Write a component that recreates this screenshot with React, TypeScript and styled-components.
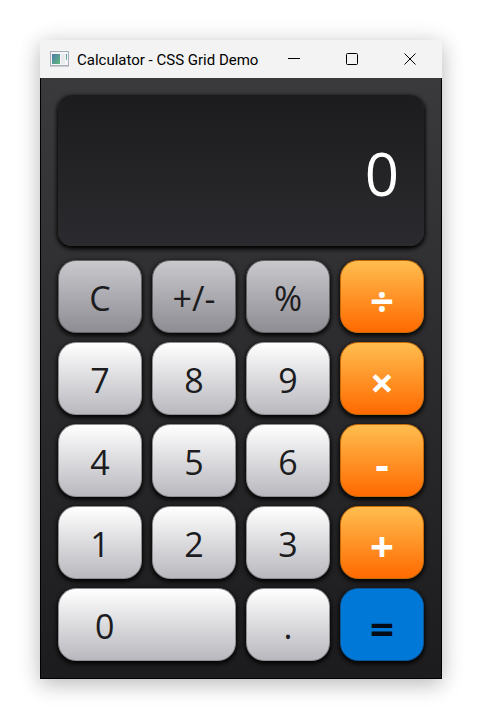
import React, { useState } from "react";
import styled, { createGlobalStyle, css } from "styled-components";

const GlobalStyle = createGlobalStyle`
  * { box-sizing: border-box; }
  body {
    margin: 0;
    background: #fff;
    font-family: "Open Sans", "Noto Sans", sans-serif;
  }
`;

const Desktop = styled.main`
  display: flex;
  min-height: 100vh;
  padding: 40px;
`;

const Window = styled.section`
  flex: 1;
  display: flex;
  flex-direction: column;
  box-shadow: 0 0 24px rgba(0, 0, 0, 0.08), 0 6px 20px rgba(0, 0, 0, 0.22);
`;

const TitleBar = styled.header`
  display: flex;
  align-items: center;
  height: 38px;
  padding: 0 3px 0 10px;
  background: #f3f3f3;
`;

const Title = styled.h1`
  flex: 1;
  min-width: 0;
  margin: 2px 0 0 8px;
  font-family: Roboto, "Open Sans", sans-serif;
  font-size: 15px;
  line-height: 20px;
  font-weight: 400;
  color: #000;
  white-space: nowrap;
`;

const WindowButton = styled.button`
  flex: none;
  display: flex;
  align-items: center;
  justify-content: center;
  width: 58px;
  height: 38px;
  padding: 0;
  border: 0;
  background: transparent;
`;

const Body = styled.div`
  flex: 1;
  display: flex;
  flex-direction: column;
  gap: 14px;
  padding: 17px;
  border: 1px solid #000;
  border-top: 0;
  background: linear-gradient(#3a3a3c, #1c1c1e);
`;

const Display = styled.output`
  display: flex;
  align-items: center;
  justify-content: flex-end;
  height: 151px;
  padding: 4px 24px 0;
  border: 1px solid transparent;
  border-radius: 14px;
  background: linear-gradient(#1c1c1e, #2b2b2f) border-box;
  box-shadow: 0 2px 4px 1px #000;
  color: #fff;
  font-size: 60px;
  line-height: 80px;
`;

const Keypad = styled.div`
  flex: 1;
  display: grid;
  grid-template-columns: repeat(4, 1fr);
  grid-auto-rows: 1fr;
  gap: 9px 10px;
`;

type Kind = "digit" | "function" | "operator" | "equals";

const operatorText = css`
  padding-top: 6px;
  font-size: 42px;
  font-weight: 700;
`;

const kinds = {
  digit: css`
    background: linear-gradient(#ffffff, #b8b8be);
    border-color: #8e8e93;
    color: #1c1c1e;
  `,
  function: css`
    background: linear-gradient(#c9c8cd, #8e8d93);
    border-color: #636366;
    color: #1c1c1e;
  `,
  operator: css`
    background: linear-gradient(#ffbd4f, #ff6a00);
    border-color: #c76a08;
    color: #fff;
    ${operatorText}
  `,
  equals: css`
    background: #0078d7;
    border-color: #0a5596;
    color: #050a14;
    ${operatorText}
  `,
};

const Key = styled.button<{ $kind: Kind; $wide?: boolean }>`
  min-width: 0;
  padding: 2px 0 0;
  border: 1px solid;
  border-radius: 18px;
  background-origin: border-box;
  box-shadow: 0 2px 4px 1px rgba(0, 0, 0, 0.9);
  font-family: inherit;
  font-size: 34px;
  font-weight: 400;
  line-height: 48px;
  ${({ $kind }) => kinds[$kind]}
  ${({ $wide }) => $wide && css`
    grid-column: span 2;
    padding-left: 36px;
    text-align: left;
  `}
`;

const AppIcon = () => (
  <svg width="19" height="16" viewBox="0 0 19 16" aria-hidden="true">
    <defs>
      <linearGradient id="screen" x1="0" y1="0" x2="1" y2="1">
        <stop offset="0" stopColor="#4b7cb0" />
        <stop offset="1" stopColor="#5fb878" />
      </linearGradient>
      <linearGradient id="bar" x1="0" y1="0" x2="0" y2="1">
        <stop offset="0" stopColor="#4a86b8" />
        <stop offset="1" stopColor="#6cc08a" />
      </linearGradient>
    </defs>
    <rect x="0.5" y="0.5" width="18" height="14" fill="#f5f5f7" stroke="#a9adb8" />
    <path d="M0 15.5h19" stroke="#c9ccd3" />
    <rect x="2" y="3" width="8" height="10" fill="url(#screen)" />
    <rect x="11" y="3" width="4" height="10" fill="#e9eaee" />
    <rect x="16" y="3" width="1" height="6" fill="url(#bar)" />
  </svg>
);

const keys: { label: string; kind: Kind; wide?: boolean }[] = [
  { label: "C", kind: "function" },
  { label: "+/-", kind: "function" },
  { label: "%", kind: "function" },
  { label: "÷", kind: "operator" },
  { label: "7", kind: "digit" },
  { label: "8", kind: "digit" },
  { label: "9", kind: "digit" },
  { label: "×", kind: "operator" },
  { label: "4", kind: "digit" },
  { label: "5", kind: "digit" },
  { label: "6", kind: "digit" },
  { label: "-", kind: "operator" },
  { label: "1", kind: "digit" },
  { label: "2", kind: "digit" },
  { label: "3", kind: "digit" },
  { label: "+", kind: "operator" },
  { label: "0", kind: "digit", wide: true },
  { label: ".", kind: "digit" },
  { label: "=", kind: "equals" },
];

const compute = (a: number, op: string, b: number) =>
  op === "+" ? a + b : op === "-" ? a - b : op === "×" ? a * b : a / b;

export default function App() {
  const [value, setValue] = useState("0");
  const [fresh, setFresh] = useState(true);
  const [pending, setPending] = useState<{ left: number; op: string } | null>(null);

  const press = (label: string, kind: Kind) => {
    if (kind === "digit") {
      if (label === "." && !fresh && value.includes(".")) return;
      const start = label === "." ? "0." : label;
      setValue(fresh || (value === "0" && label !== ".") ? start : value + label);
      setFresh(false);
    } else if (label === "C") {
      setValue("0");
      setPending(null);
      setFresh(true);
    } else if (label === "+/-") {
      setValue(String(-Number(value)));
    } else if (label === "%") {
      setValue(String(Number(value) / 100));
    } else {
      const current = Number(value);
      const result = pending ? compute(pending.left, pending.op, current) : current;
      setValue(String(Number(result.toPrecision(8))));
      setPending(kind === "equals" ? null : { left: result, op: label });
      setFresh(true);
    }
  };

  return (
    <>
      <GlobalStyle />
      <Desktop>
        <Window>
          <TitleBar>
            <AppIcon />
            <Title>Calculator - CSS Grid Demo</Title>
            <WindowButton aria-label="Minimize">
              <svg width="12" height="12"><path d="M0 5.5h12" stroke="#000" /></svg>
            </WindowButton>
            <WindowButton aria-label="Maximize">
              <svg width="12" height="12" fill="none">
                <rect x="0.5" y="0.5" width="11" height="11" rx="1" stroke="#000" />
              </svg>
            </WindowButton>
            <WindowButton aria-label="Close">
              <svg width="12" height="12"><path d="M0.5 0.5l11 11M11.5 0.5l-11 11" stroke="#000" /></svg>
            </WindowButton>
          </TitleBar>
          <Body>
            <Display>{value}</Display>
            <Keypad>
              {keys.map((key) => (
                <Key
                  key={key.label}
                  $kind={key.kind}
                  $wide={key.wide}
                  onClick={() => press(key.label, key.kind)}
                >
                  {key.label}
                </Key>
              ))}
            </Keypad>
          </Body>
        </Window>
      </Desktop>
    </>
  );
}
